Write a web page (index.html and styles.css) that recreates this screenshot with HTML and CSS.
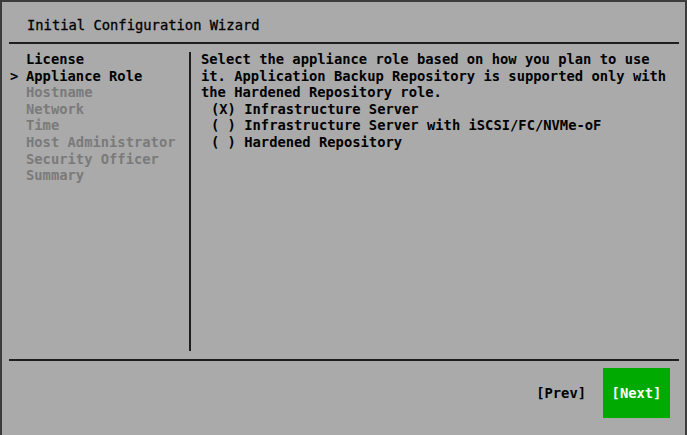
FILE: index.html
```html
<!DOCTYPE html>
<html lang="en">

<head>
    <meta charset="UTF-8">
    <meta name="viewport" content="width=device-width, initial-scale=1.0">
    <title>Initial Configuration Wizard</title>
    <link rel="stylesheet" href="styles.css">
</head>

<body>
    <div class="screen">
        <div class="header">Initial Configuration Wizard</div>

        <div class="main">
            <ul class="steps">
                <li class="done">License</li>
                <li class="current">Appliance Role</li>
                <li>Hostname</li>
                <li>Network</li>
                <li>Time</li>
                <li>Host Administrator</li>
                <li>Security Officer</li>
                <li>Summary</li>
            </ul>

            <div class="content">
                <p class="intro">Select the appliance role based on how you plan to use
it. Application Backup Repository is supported only with
the Hardened Repository role.</p>
                <div class="option">(X) Infrastructure Server</div>
                <div class="option">( ) Infrastructure Server with iSCSI/FC/NVMe-oF</div>
                <div class="option">( ) Hardened Repository</div>
            </div>
        </div>

        <div class="footer">
            <button class="btn">[Prev]</button>
            <button class="btn btn-active">[Next]</button>
        </div>
    </div>
</body>

</html>
```

FILE: styles.css
```css
html,
body {
    margin: 0;
    padding: 0;
    background-color: #aaaaaa;
}

body {
    font-family: "DejaVu Sans Mono", "Liberation Mono", monospace;
    font-size: 13.8px;
    font-weight: bold;
    line-height: 16.6px;
    color: #000000;
}

.screen {
    height: 435px;
    box-sizing: border-box;
    border: 2px solid #3c3c3c;
    border-bottom: none;
    padding: 0 6px 0 7px;
    display: flex;
    flex-direction: column;
}

.header {
    height: 42px;
    box-sizing: border-box;
    padding: 15px 0 0 18px;
    border-bottom: 2px solid #1e1e1e;
    font-weight: normal;
    -webkit-text-stroke: 0.3px #000;
}

.main {
    flex: 1;
    display: flex;
    padding: 8px 0;
}

.steps {
    list-style: none;
    margin: 0;
    padding: 0 0 0 17px;
    width: 163px;
    border-right: 2px solid #1e1e1e;
}

.steps li,
.content {
    position: relative;
    top: -1px;
}

.steps li {
    color: #7a7a7a;
    white-space: pre;
}

.steps li.done,
.steps li.current {
    color: #000000;
}

.steps li.current::before {
    content: ">";
    position: absolute;
    left: -16px;
}

.content {
    padding-left: 10px;
}

.intro {
    margin: 0;
    white-space: pre;
}

.option {
    padding-left: 10px;
    white-space: pre;
}

.footer {
    height: 76px;
    box-sizing: border-box;
    border-top: 2px solid #1e1e1e;
    display: flex;
    justify-content: flex-end;
    align-items: flex-start;
    padding: 7px 9px 0 0;
    gap: 17px;
}

.btn {
    font: inherit;
    color: #000000;
    background: none;
    border: none;
    padding: 0;
    height: 50px;
    cursor: pointer;
}

.btn-active {
    width: 67px;
    background-color: #00aa00;
    color: #ffffff;
}
```
